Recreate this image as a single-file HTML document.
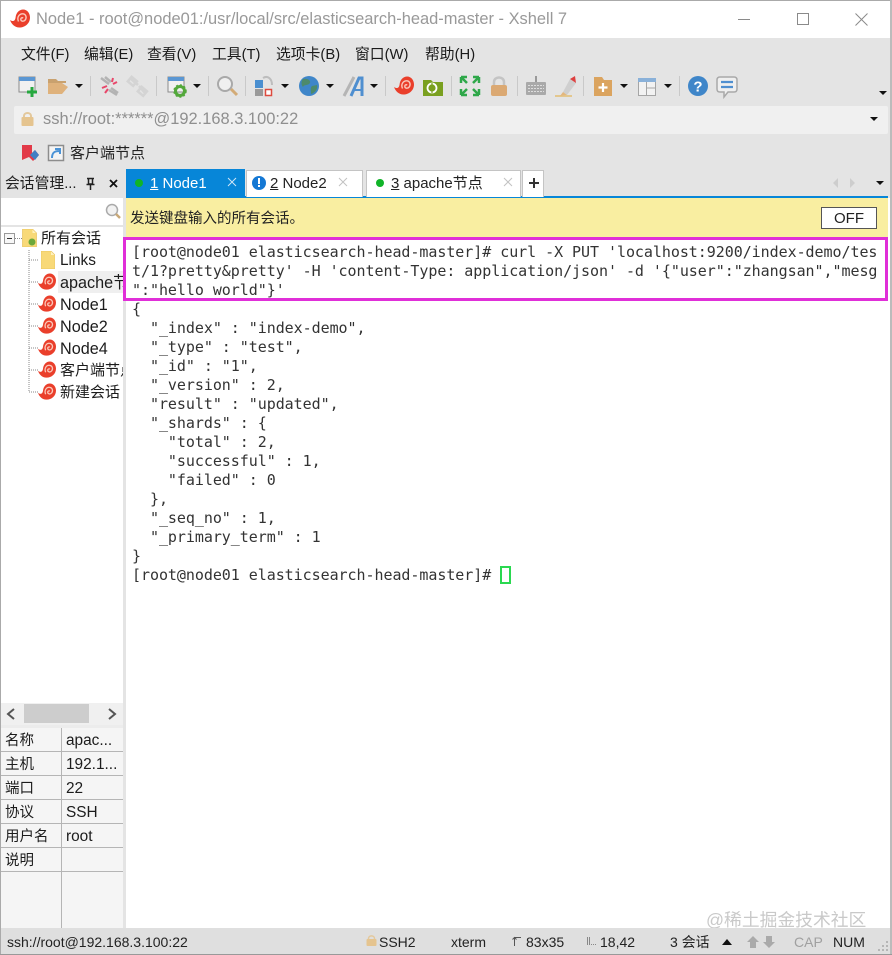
<!DOCTYPE html>
<html><head><meta charset="utf-8"><style>
html,body{margin:0;padding:0;background:#fff}
#w{position:relative;width:892px;height:955px;overflow:hidden;background:#fff;font-family:"Liberation Sans","Noto Sans CJK SC",sans-serif;color:#111}
.a{position:absolute;white-space:pre}
.m{font-size:14.8px;top:46px;line-height:18px;color:#1a1a1a}
.s{position:absolute;width:1px;height:20px;top:76px;background:#c9c9c9}
.d{position:absolute;width:0;height:0;border-left:4px solid transparent;border-right:4px solid transparent;border-top:4px solid #111}
svg.a{overflow:visible}
.t{font-size:16.2px;line-height:20px;color:#1c1c1c}
.r{position:absolute;left:1px;width:122px;height:1px;background:#b5b5b5}
.c{font-size:15.4px;line-height:20px;color:#1c1c1c}
.st{font-size:14px;top:933px;line-height:18px;color:#222}
#term{position:absolute;left:132px;top:243px;font:15px/19px "DejaVu Sans Mono",monospace;letter-spacing:-.05px;color:#333;white-space:pre;margin:0}
</style></head><body><div id="w">
<svg width="0" height="0" style="position:absolute"><defs>
<symbol id="sn" viewBox="0 0 20 20"><path d="M0 11 C3 13 5 12 5.500 9 C6 3 10 0.500 13 0.500 C17.500 0.500 20 4.500 20 8.500 C20 14.500 15 18.500 9.500 18.500 C4.500 18.500 1.500 15 0 11Z" fill="#ea3f2b"/><path d="M8.500 12.500 C6.500 8 9.500 4.500 13 4.800 C16 5.200 17 8.500 15.200 11 C13.500 13 10.800 12.300 10.800 10.200 C10.800 9 12 8.400 13.200 9" fill="none" stroke="#fbc9bb" stroke-width="1.400"/></symbol>
<symbol id="fd" viewBox="0 0 14 18"><path d="M0 0H10L14 4V18H0Z" fill="#f8d978"/><path d="M10 0V4H14" fill="#fff2c0"/><path d="M0 0H10L14 4V18H0Z" fill="none" stroke="#e7c35f" stroke-width=".7"/></symbol>
</defs></svg>

<!-- title -->
<div class="a" style="left:0;top:0;width:892px;height:38px;background:#fff"></div>
<div class="a" style="left:0;top:38px;width:892px;height:130px;background:#e4e4e4"></div>
<div class="a" style="left:0;top:168px;width:892px;height:30px;background:#e4e4e4"></div>
<svg class="a" style="left:10px;top:9px" width="20" height="20"><use href="#sn"/></svg>
<div class="a" style="left:36px;top:10px;font-size:16.45px;line-height:19px;color:#999">Node1 - root@node01:/usr/local/src/elasticsearch-head-master - Xshell 7</div>
<svg class="a" style="left:730px;top:8px" width="150" height="22" fill="none" stroke="#8a8a8a" stroke-width="1"><path d="M8 11.500H20"/><rect x="67.500" y="5.500" width="11" height="11"/><path d="M125.500 5.500L137.500 17.500M137.500 5.500L125.500 17.500"/></svg>

<!-- menu -->
<div class="a m" style="left:21px">文件(F)</div><div class="a m" style="left:84px">编辑(E)</div><div class="a m" style="left:147px">查看(V)</div><div class="a m" style="left:212px">工具(T)</div><div class="a m" style="left:276px">选项卡(B)</div><div class="a m" style="left:355px">窗口(W)</div><div class="a m" style="left:425px">帮助(H)</div>

<!-- toolbar -->
<svg class="a" style="left:0;top:70px" width="892" height="32">
<rect x="19" y="7" width="16" height="15" fill="#f1f1f1" stroke="#8c8c8c"/><rect x="19" y="7" width="16" height="4" fill="#5b97d3"/><path d="M27 22H37M32 17V27" stroke="#26a83f" stroke-width="3"/>
<path d="M48 9H56L58 11H66V13H48Z" fill="#c9a16e"/><path d="M48 13H62L68 17L62 24H48Z" fill="#dfb27c"/>
<g fill="none" stroke="#b3b3b3" stroke-width="2.500"><path d="M101 8L109 14M105 7L111 12"/><path d="M109 20L117 25M111 18L118 23"/><path d="M130 8L138 15M139 16L146 24" stroke="#d4d4d4"/><rect x="129" y="8" width="7" height="6" stroke="#d4d4d4" transform="rotate(40 132 11)"/><rect x="139" y="18" width="7" height="6" stroke="#d4d4d4" transform="rotate(40 142 21)"/></g>
<path d="M113 8L112 12M117 12L113 14M102 18L107 16M105 23L108 19" stroke="#e8476a" stroke-width="2"/>
<rect x="168" y="7" width="16" height="15" fill="#f1f1f1" stroke="#8c8c8c"/><rect x="168" y="7" width="16" height="4" fill="#5b97d3"/><circle cx="180" cy="21" r="4.500" fill="none" stroke="#53a83b" stroke-width="3"/><circle cx="180" cy="21" r="6" fill="none" stroke="#53a83b" stroke-width="1.500" stroke-dasharray="2 2"/>
<circle cx="225" cy="14" r="7" fill="#f0f0f0" stroke="#a9a9a9" stroke-width="2"/><path d="M231 19L237 25" stroke="#d3ab77" stroke-width="3"/>
<rect x="255" y="10" width="8" height="8" fill="#4a8fd0"/><rect x="255" y="19" width="8" height="7" fill="#9a9a9a"/><rect x="265.500" y="19.500" width="6" height="6" fill="#fff" stroke="#dd4b3f" stroke-width="1.500"/><path d="M263 8C268 5 272 9 272 15" fill="none" stroke="#bdbdbd" stroke-width="2"/>
<circle cx="309" cy="16" r="10" fill="#3f86c9"/><path d="M303 9C307 8 311 10 310 13C308 16 304 14 303 17C301 15 301 11 303 9ZM312 16L317 15C318 19 315 23 311 24C311 20 310 18 312 16Z" fill="#4d8a6c"/>
<path d="M344 26L354 7" stroke="#b5b5b5" stroke-width="3"/><path d="M351 26L359 8H362V26" fill="none" stroke="#4f8fd0" stroke-width="3"/><path d="M354 20H362" stroke="#4f8fd0" stroke-width="2"/>
<path d="M423 10H431L433 12H443V26H423Z" fill="#7aa020"/><circle cx="432" cy="18" r="4.500" fill="none" stroke="#fff" stroke-width="1.800"/><path d="M432 13V23" stroke="#7aa020" stroke-width="1.200"/>
<g fill="none" stroke="#2fa84a" stroke-width="2.500"><path d="M461 7H467M461 7V13M461 7L467 13M479 7H473M479 7V13M479 7L473 13M461 25H467M461 25V19M461 25L467 19M479 25H473M479 25V19M479 25L473 19"/></g>
<path d="M494 15V12C494 6 504 6 504 12V15" fill="none" stroke="#c4c4c4" stroke-width="2.500"/><rect x="491" y="15" width="16" height="11" rx="2" fill="#dba973"/>
<rect x="526" y="12" width="20" height="13" rx="1" fill="#a9a9a9"/><path d="M536 6V12" stroke="#999" stroke-width="2"/><path d="M528 15.500H544M528 18.500H544M528 21.500H544" stroke="#ddd" stroke-dasharray="2 1"/>
<path d="M563 22L570 9L576 13L567 25Z" fill="#cfcfcf"/><path d="M570 9L575 6L576 13Z" fill="#dd4040"/><path d="M555 26H572" stroke="#e3c78e" stroke-width="2"/><path d="M563 22L560 26L567 25Z" fill="#e3b77e"/>
<path d="M594 7H602L604 10H612V26H594Z" fill="#dba45f"/><path d="M603 13V22M598.500 17.500H607.500" stroke="#fff" stroke-width="2.200"/>
<rect x="638.500" y="8.500" width="17" height="17" fill="#f2f2f2" stroke="#a5a5a5"/><rect x="638" y="8" width="18" height="4" fill="#8ab1d9"/><path d="M646.500 12V25M647 18H655" stroke="#a5a5a5"/>
<circle cx="698" cy="16" r="10" fill="#3f86c9"/><text x="698" y="21.500" font-family="Liberation Sans" font-size="15" font-weight="bold" fill="#fff" text-anchor="middle">?</text>
<path d="M720 7H734Q737 7 737 10V19Q737 22 734 22H728L724 27V22H720Q717 22 717 19V10Q717 7 720 7Z" fill="#efefef" stroke="#a9a9a9" stroke-width="1.500"/><path d="M721 12H733M721 17H733" stroke="#4f8fd0" stroke-width="2.200"/>
</svg>
<svg class="a" style="left:394px;top:76px" width="20" height="20"><use href="#sn"/></svg>
<div class="s" style="left:90px"></div><div class="s" style="left:156px"></div><div class="s" style="left:208px"></div><div class="s" style="left:245px"></div><div class="s" style="left:385px"></div><div class="s" style="left:451px"></div><div class="s" style="left:517px"></div><div class="s" style="left:583px"></div><div class="s" style="left:679px"></div>
<div class="d" style="left:75px;top:84px"></div><div class="d" style="left:193px;top:84px"></div><div class="d" style="left:281px;top:84px"></div><div class="d" style="left:326px;top:84px"></div><div class="d" style="left:370px;top:84px"></div><div class="d" style="left:620px;top:84px"></div><div class="d" style="left:664px;top:84px"></div><div class="d" style="left:879px;top:91px"></div>

<!-- address -->
<div class="a" style="left:14px;top:106px;width:874px;height:28px;background:#f0f0f0;border-radius:2px"></div>
<svg class="a" style="left:21px;top:112px" width="13" height="14"><path d="M3 6V4C3 0 10 0 10 4V6" fill="none" stroke="#e3c89c" stroke-width="2"/><rect x="0.500" y="5" width="12" height="9" rx="1" fill="#e5c48f"/></svg>
<div class="a" style="left:43px;top:110px;font-size:16.45px;line-height:19px;color:#8f8f8f">ssh://root:******@192.168.3.100:22</div>
<div class="d" style="left:870px;top:117px"></div>

<!-- links -->
<svg class="a" style="left:21px;top:144px" width="46" height="18"><path d="M1 1H11V9L14 6L18 11L12 17L8 13L1 16Z" fill="#e23a48"/><path d="M9 11L14 6L18 11L14 16Z" fill="#3f7fc4"/><rect x="27.500" y="1.500" width="15" height="15" fill="#f4f4f4" stroke="#8d8d8d" stroke-width="1.500"/><path d="M31 14C31 9 33 7 38 7M34 5H39V10" fill="none" stroke="#4b93d6" stroke-width="2"/></svg>
<div class="a" style="left:70px;top:144px;font-size:15px;line-height:19px;color:#222">客户端节点</div>

<!-- tabs -->
<div class="a" style="left:126px;top:169px;width:119px;height:28px;background:#0786d8"></div>
<div class="a" style="left:126px;top:196px;width:762px;height:2px;background:#0786d8"></div>
<div class="a" style="left:246px;top:170px;width:115px;height:26px;background:#fff;border:1px solid #c4c4c4;border-bottom:0"></div>
<div class="a" style="left:366px;top:170px;width:153px;height:26px;background:#fff;border:1px solid #c4c4c4;border-bottom:0"></div>
<div class="a" style="left:522px;top:170px;width:20px;height:26px;background:#fff;border:1px solid #c4c4c4;border-bottom:0"></div>
<svg class="a" style="left:126px;top:169px" width="430" height="28">
<circle cx="13" cy="14" r="4" fill="#10b428"/><path d="M102 9L110 17M110 9L102 17" stroke="#cfe6f6"/>
<circle cx="133" cy="14" r="7" fill="#1478d4"/><rect x="132" y="9" width="2" height="6" fill="#fff"/><rect x="132" y="16" width="2" height="2" fill="#fff"/><path d="M213 9L221 17M221 9L213 17" stroke="#c2c2c2"/>
<circle cx="254" cy="14" r="4" fill="#10b428"/><path d="M378 9L386 17M386 9L378 17" stroke="#c2c2c2"/>
<path d="M408 9V19M403 14H413" stroke="#333" stroke-width="2"/>
</svg>
<div class="a" style="left:150px;top:174px;font-size:15px;line-height:19px;color:#fff"><u>1</u> Node1</div>
<div class="a" style="left:270px;top:174px;font-size:15px;line-height:19px;color:#222"><u>2</u> Node2</div>
<div class="a" style="left:391px;top:174px;font-size:15px;line-height:19px;color:#222"><u>3</u> apache节点</div>
<svg class="a" style="left:830px;top:176px" width="60" height="14"><path d="M8 2L3 7L8 12Z" fill="#cdcdcd"/><path d="M20 2L25 7L20 12Z" fill="#cdcdcd"/><path d="M46 5H54L50 9Z" fill="#111"/></svg>

<!-- yellow bar -->
<div class="a" style="left:126px;top:198px;width:762px;height:39px;background:#f9eea1"></div>
<div class="a" style="left:130px;top:209px;font-size:14.5px;line-height:20px;color:#222">发送键盘输入的所有会话。</div>
<div class="a" style="left:821px;top:207px;width:54px;height:20px;background:#fff;border:1px solid #555;font-size:15px;line-height:21px;text-align:center;color:#222">OFF</div>

<!-- terminal -->
<pre id="term">[root@node01 elasticsearch-head-master]# curl -X PUT 'localhost:9200/index-demo/tes
t/1?pretty&amp;pretty' -H 'content-Type: application/json' -d '{"user":"zhangsan","mesg
":"hello world"}'
{
  "_index" : "index-demo",
  "_type" : "test",
  "_id" : "1",
  "_version" : 2,
  "result" : "updated",
  "_shards" : {
    "total" : 2,
    "successful" : 1,
    "failed" : 0
  },
  "_seq_no" : 1,
  "_primary_term" : 1
}
[root@node01 elasticsearch-head-master]# </pre>
<div class="a" style="left:500px;top:566px;width:7px;height:14px;border:2px solid #2ad850"></div>

<!-- left panel -->
<div class="a" style="left:0;top:168px;width:1px;height:787px;background:#aaa"></div>
<div class="a" style="left:1px;top:198px;width:122px;height:730px;background:#fff"></div>
<div class="a" style="left:123px;top:168px;width:3px;height:760px;background:#e4e4e4"></div>
<div class="a" style="left:5px;top:175px;font-size:14.8px;line-height:19px;color:#222">会话管理...</div>
<svg class="a" style="left:84px;top:177px" width="36" height="14"><path d="M3 1.500H10M4.500 1.500V7H8.500V1.500M2.500 7.500H10.500M6.500 8V13" fill="none" stroke="#222" stroke-width="1.500"/><path d="M26 3L33 10M33 3L26 10" stroke="#111" stroke-width="1.800"/></svg>
<div class="a" style="left:3px;top:198px;width:117px;height:27px;background:#fff"></div>
<div class="a" style="left:0;top:225px;width:123px;height:2px;background:#e4e4e4"></div>
<svg class="a" style="left:104px;top:203px" width="18" height="18"><circle cx="8" cy="7" r="5.500" fill="#f2f2f2" stroke="#aaa" stroke-width="1.500"/><path d="M12 11L16 15" stroke="#c9a878" stroke-width="2.500"/></svg>

<svg class="a" style="left:0;top:228px" width="60" height="180"><rect x="4.500" y="5.500" width="10" height="10" fill="#f7f7f7" stroke="#999"/><path d="M7 10.500H12" stroke="#333"/><path d="M29 22V164M29 32H38M29 54H38M29 76H38M29 98H38M29 120H38M29 142H38M29 164H38" fill="none" stroke="#888" stroke-dasharray="1 1"/><path d="M15 10.500H22" stroke="#888" stroke-dasharray="1 1"/></svg>
<svg class="a" style="left:22px;top:229px" width="15" height="18"><use href="#fd"/></svg>
<svg class="a" style="left:26px;top:236px" width="12" height="12"><circle cx="6" cy="6" r="3.500" fill="#6ca83a"/></svg>
<svg class="a" style="left:41px;top:251px" width="14" height="18"><use href="#fd"/></svg>
<div class="a" style="left:58px;top:271px;width:65px;height:22px;background:#efefef"></div>
<svg class="a" style="left:38px;top:273px" width="18" height="18"><use href="#sn"/></svg>
<svg class="a" style="left:38px;top:295px" width="18" height="18"><use href="#sn"/></svg>
<svg class="a" style="left:38px;top:317px" width="18" height="18"><use href="#sn"/></svg>
<svg class="a" style="left:38px;top:339px" width="18" height="18"><use href="#sn"/></svg>
<svg class="a" style="left:38px;top:361px" width="18" height="18"><use href="#sn"/></svg>
<svg class="a" style="left:38px;top:383px" width="18" height="18"><use href="#sn"/></svg>
<div class="a t" style="left:41px;top:229px;font-size:15px">所有会话</div>
<div class="a t" style="left:60px;top:251px;font-size:15.4px">Links</div>
<div class="a t" style="left:60px;top:273px;width:63px;overflow:hidden">apache节点</div>
<div class="a t" style="left:60px;top:295px">Node1</div>
<div class="a t" style="left:60px;top:317px">Node2</div>
<div class="a t" style="left:60px;top:339px">Node4</div>
<div class="a t" style="left:60px;top:361px;width:63px;overflow:hidden;font-size:15px">客户端节点</div>
<div class="a t" style="left:60px;top:383px;font-size:15px">新建会话</div>

<!-- scrollbar -->
<div class="a" style="left:1px;top:703px;width:122px;height:22px;background:#f0f0f0"></div>
<div class="a" style="left:24px;top:704px;width:65px;height:19px;background:#cdcdcd"></div>
<svg class="a" style="left:1px;top:703px" width="122" height="22" fill="none" stroke="#555" stroke-width="2"><path d="M13 6L7 11L13 16M108 6L114 11L108 16"/></svg>

<!-- table -->
<div class="a" style="left:1px;top:725px;width:122px;height:203px;background:#f5f5f5"></div>
<div class="a" style="left:1px;top:725px;width:122px;height:3px;background:#ececec"></div>
<div class="a" style="left:61px;top:728px;width:1px;height:200px;background:#b5b5b5"></div>
<div class="r" style="top:751px"></div><div class="r" style="top:775px"></div><div class="r" style="top:799px"></div><div class="r" style="top:823px"></div><div class="r" style="top:847px"></div><div class="r" style="top:871px"></div>
<div class="a c" style="left:5px;top:731px;font-size:14.5px">名称</div><div class="a c" style="left:66px;top:731px">apac...</div>
<div class="a c" style="left:5px;top:755px;font-size:14.5px">主机</div><div class="a c" style="left:66px;top:755px">192.1...</div>
<div class="a c" style="left:5px;top:779px;font-size:14.5px">端口</div><div class="a c" style="left:66px;top:779px">22</div>
<div class="a c" style="left:5px;top:803px;font-size:14.5px">协议</div><div class="a c" style="left:66px;top:803px">SSH</div>
<div class="a c" style="left:5px;top:827px;font-size:14.5px">用户名</div><div class="a c" style="left:66px;top:827px">root</div>
<div class="a c" style="left:5px;top:851px;font-size:14.5px">说明</div>

<!-- watermark -->
<div class="a" style="left:706px;top:910px;font-size:17.8px;line-height:20px;color:#c9c9c9">@稀土掘金技术社区</div>

<!-- status -->
<div class="a" style="left:0;top:928px;width:892px;height:27px;background:#dfdfdf"></div>
<div class="a st" style="left:7px">ssh://root@192.168.3.100:22</div>
<svg class="a" style="left:366px;top:935px" width="11" height="12"><path d="M2.500 5V3.500C2.500 0 8.500 0 8.500 3.500V5" fill="none" stroke="#e3c89c" stroke-width="1.500"/><rect x="0.500" y="4" width="10" height="7" rx="1" fill="#e5c48f"/></svg>
<div class="a st" style="left:379px">SSH2</div>
<div class="a st" style="left:451px">xterm</div>
<svg class="a" style="left:512px;top:936px" width="10" height="11" fill="none" stroke="#555"><path d="M2.500 10V1.500H9"/><path d="M0.500 3.500L2.500 1.500L4.500 3.500" /></svg>
<div class="a st" style="left:526px">83x35</div>
<svg class="a" style="left:587px;top:937px" width="10" height="9" fill="#888"><rect x="0" y="0" width="1" height="8"/><rect x="2" y="0" width="1" height="8"/><rect x="4" y="7" width="1" height="1"/><rect x="6" y="7" width="1" height="1"/><rect x="8" y="7" width="1" height="1"/></svg>
<div class="a st" style="left:600px">18,42</div>
<div class="a st" style="left:670px">3 会话</div>
<svg class="a" style="left:722px;top:939px" width="10" height="6"><path d="M5 0L10 6H0Z" fill="#111"/></svg>
<svg class="a" style="left:747px;top:936px" width="28" height="12" fill="#aaa"><path d="M6 0L12 6H9V12H3V6H0Z"/><path d="M22 12L16 6H19V0H25V6H28Z"/></svg>
<div class="a st" style="left:794px;color:#a0a0a0">CAP</div>
<div class="a st" style="left:833px;color:#222">NUM</div>
<svg class="a" style="left:876px;top:941px" width="14" height="12" fill="#b5b5b5"><rect x="10" y="0" width="2" height="2"/><rect x="6" y="4" width="2" height="2"/><rect x="10" y="4" width="2" height="2"/><rect x="2" y="8" width="2" height="2"/><rect x="6" y="8" width="2" height="2"/><rect x="10" y="8" width="2" height="2"/></svg>

<!-- magenta highlight -->
<div class="a" style="left:123px;top:237px;width:759px;height:58px;border:3px solid #e02fd8"></div>

<!-- borders -->
<div class="a" style="left:0;top:0;width:892px;height:1px;background:#aaa"></div>
<div class="a" style="left:0;top:0;width:1px;height:955px;background:#aaa"></div>
<div class="a" style="left:890px;top:0;width:2px;height:955px;background:#bbb"></div>
<div class="a" style="left:0;top:954px;width:892px;height:1px;background:#999"></div>
</div></body></html>
